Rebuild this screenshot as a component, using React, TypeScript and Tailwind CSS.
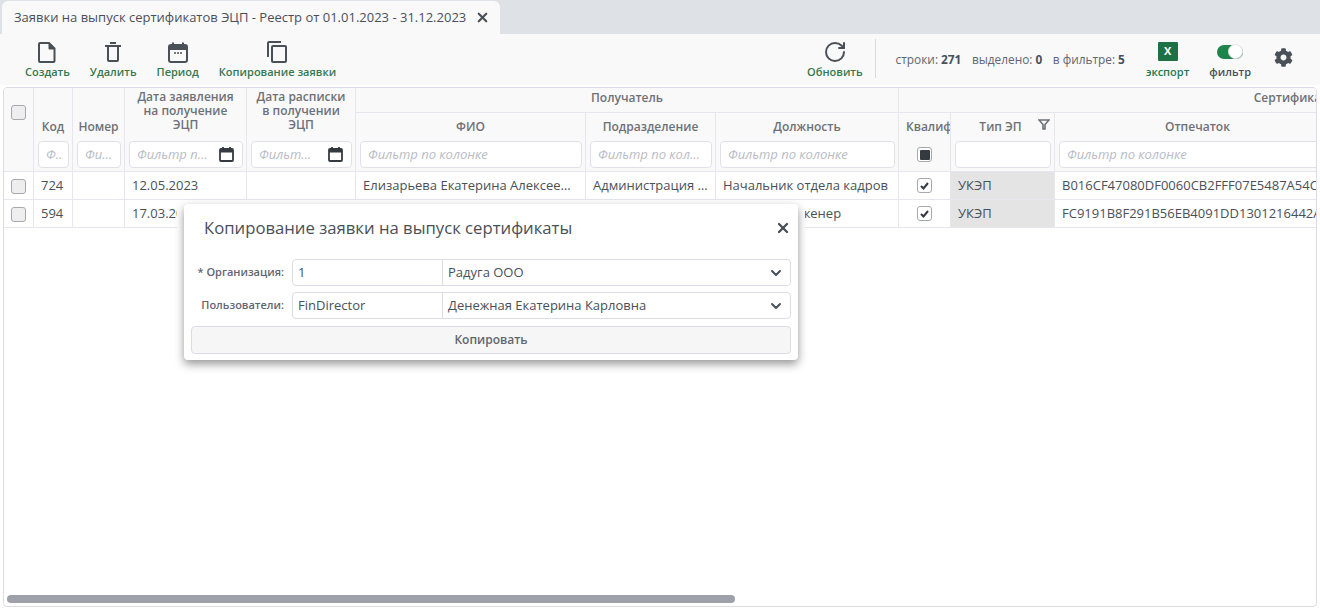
import { ChevronDown, RotateCw, X } from 'lucide-react';
import { FaCog } from 'react-icons/fa';

const FONT = "font-['Open_Sans',sans-serif]";

type Col = { key: string; title: string; width: number };

const RECIPIENT: Col[] = [
  { key: 'fio', title: 'ФИО', width: 230 },
  { key: 'dep', title: 'Подразделение', width: 130 },
  { key: 'pos', title: 'Должность', width: 183 },
];

const ROWS = [
  {
    id: '724',
    date: '12.05.2023',
    fio: 'Елизарьева Екатерина Алексеевна',
    dep: 'Администрация города',
    pos: 'Начальник отдела кадров',
    print: 'B016CF47080DF0060CB2FFF07E5487A54C0912AD',
  },
  {
    id: '594',
    date: '17.03.2023',
    fio: 'Денежная Екатерина Карловна',
    dep: 'Бухгалтерия',
    pos: 'Ведущий инженер',
    print: 'FC9191B8F291B56EB4091DD1301216442A77C1E0',
  },
];

function FileIcon() {
  return (
    <svg width="18" height="21" viewBox="0 0 18 21" fill="none" stroke="#495057" strokeWidth="2">
      <path d="M2 1h9l5.500 5.500V19a1 1 0 0 1-1 1H2a1 1 0 0 1-1-1V2a1 1 0 0 1 1-1z" />
      <path d="M11 1v6h6" fill="#495057" strokeWidth="1" />
    </svg>
  );
}

function TrashIcon() {
  return (
    <svg width="16" height="20" viewBox="0 0 16 20" fill="none" stroke="#495057" strokeWidth="2">
      <path d="M0 4h16M5 1h6" />
      <path d="M3 4v14a1 1 0 0 0 1 1h8a1 1 0 0 0 1-1V4" />
    </svg>
  );
}

function PeriodIcon() {
  return (
    <svg width="20" height="21" viewBox="0 0 20 21" fill="none">
      <rect x="1" y="3" width="18" height="17" rx="2" stroke="#495057" strokeWidth="2" />
      <path d="M1 3h18v5H1z" fill="#495057" />
      <path d="M5 0.500v3M15 0.500v3" stroke="#495057" strokeWidth="2" />
      <path d="M6 11h2M9 11h2M12 11h2" stroke="#495057" strokeWidth="1.500" />
    </svg>
  );
}

function CopyIcon() {
  return (
    <svg width="20" height="22" viewBox="0 0 20 22" fill="none" stroke="#495057" strokeWidth="2">
      <path d="M1 16V2a1 1 0 0 1 1-1h12" />
      <rect x="5" y="5" width="14" height="16" rx="1" />
    </svg>
  );
}

function SmallCalendar() {
  return (
    <svg width="15" height="15" viewBox="0 0 15 15" fill="none" className="shrink-0">
      <rect x="1" y="2" width="13" height="12" rx="1" stroke="#343a40" strokeWidth="1.800" />
      <path d="M1 2h13v3.500H1z" fill="#343a40" />
      <path d="M4 0v3M11 0v3" stroke="#343a40" strokeWidth="1.800" />
    </svg>
  );
}

function ToolButton({ icon, label }: { icon: React.ReactNode; label: string }) {
  return (
    <div className="flex flex-col items-center">
      <div className="flex h-[22px] items-center justify-center">{icon}</div>
      <span className="mt-[1px] text-[11px] leading-[16px] font-semibold text-[#35784f]">{label}</span>
    </div>
  );
}

function Check({ checked, dark, gray }: { checked?: boolean; dark?: boolean; gray?: boolean }) {
  return (
    <span
      className={`flex h-[15px] w-[15px] items-center justify-center rounded-[3px] border border-[#a6a8ae] ${gray ? 'bg-[#eeeeee]' : 'bg-white'}`}
    >
      {checked && (
        <svg width="9" height="8" viewBox="0 0 9 8" fill="none" stroke="#343a40" strokeWidth="2">
          <path d="M1 4l2.500 2.500L8 1" />
        </svg>
      )}
      {dark && <span className="h-[10px] w-[10px] rounded-[1px] bg-[#343a40]" />}
    </span>
  );
}

function FilterBox({ text, icon }: { text?: string; icon?: boolean }) {
  return (
    <div className={`flex h-[27px] items-center rounded-[4px] border border-[#e0e0ea] bg-white pl-[7px] ${icon ? 'gap-[10px] pr-[8px]' : 'pr-[5px]'}`}>
      <span className="min-w-0 flex-1 truncate text-left text-[13px] font-normal text-[#b9bcc6] italic">{text}</span>
      {icon && <SmallCalendar />}
    </div>
  );
}

function FilterCell({ text, icon }: { text?: string; icon?: boolean }) {
  return (
    <th className="border-r border-b border-[#e6e6ee] pt-[4px] pr-[3px] pb-[3px] pl-[4px] align-top font-normal">
      <FilterBox text={text} icon={icon} />
    </th>
  );
}

function DialogRow({ label, code, name }: { label: string; code: string; name: string }) {
  return (
    <div className="flex items-center">
      <label className="w-[101px] pr-[8px] text-right text-[11px] font-semibold text-[#5f6670]">{label}</label>
      <div className="flex h-[27px] flex-1 items-center rounded-[4px] border border-[#dcdce8] bg-white text-[13px] text-[#495057]">
        <span className="flex h-full w-[150px] items-center border-r border-[#dcdce8] pl-[5px]">{code}</span>
        <span className="flex-1 pl-[5px]">{name}</span>
        <ChevronDown size={16} strokeWidth={3} className="mr-[6px] text-[#495057]" />
      </div>
    </div>
  );
}

export default function App() {
  const th = 'border-r border-[#e6e6ee] text-[12px] leading-[14px] font-semibold text-[#6c7178]';
  const td = 'h-[28px] overflow-hidden border-r border-b border-[#e6e6ee] px-[7px] text-[13px] font-normal whitespace-nowrap text-[#495057]';

  return (
    <div className={`relative flex h-[611px] w-[1320px] flex-col overflow-hidden bg-white ${FONT}`}>
      {/* tabs */}
      <div className="flex h-[34px] shrink-0 items-end bg-[#dee1e6] pl-[2px]">
        <div className="flex h-[33px] w-[498px] items-center rounded-t-[6px] bg-[#f9f9f9] pl-[12px]">
          <span className="text-[13px] whitespace-nowrap text-[#4b4f5c]">
            Заявки на выпуск сертификатов ЭЦП - Реестр от 01.01.2023 - 31.12.2023
          </span>
          <X size={15} strokeWidth={3.500} className="ml-[9px] text-[#495057]" />
        </div>
      </div>

      {/* toolbar */}
      <div className="flex h-[51px] shrink-0 items-start bg-[#f9f9f9] pt-[7px] pl-[25px]">
        <div className="flex gap-[20px]">
          <ToolButton icon={<FileIcon />} label="Создать" />
          <ToolButton icon={<TrashIcon />} label="Удалить" />
          <ToolButton icon={<PeriodIcon />} label="Период" />
          <ToolButton icon={<CopyIcon />} label="Копирование заявки" />
        </div>
        <div className="ml-auto flex items-start pr-[27px]">
          <ToolButton icon={<RotateCw size={24} strokeWidth={2} className="text-[#495057]" />} label="Обновить" />
          <div className="mt-[-2px] ml-[12px] h-[39px] w-px bg-[#dcdcdc]" />
          <div className="mt-[10px] ml-[20px] flex gap-[10.500px] text-[11.850px] leading-[16px] text-[#5f6670]">
            <span>
              строки: <b className="font-bold text-[#495057]">271</b>
            </span>
            <span>
              выделено: <b className="font-bold text-[#495057]">0</b>
            </span>
            <span>
              в фильтре: <b className="font-bold text-[#495057]">5</b>
            </span>
          </div>
          <div className="ml-[21px] flex flex-col items-center">
            <div className="mt-[1px] flex h-[19px] w-[20px] items-center justify-center rounded-[1px] bg-[#1e7145] text-[11px] font-bold text-white">
              X
            </div>
            <span className="mt-[3px] text-[11px] leading-[16px] font-semibold text-[#217a50]">экспорт</span>
          </div>
          <div className="ml-[20px] flex flex-col items-center">
            <div className="mt-[1px] flex h-[19px] items-center">
              <div className="flex h-[14px] w-[26px] items-center justify-end rounded-full bg-[#1e8449]">
                <span className="h-[15px] w-[15px] rounded-full border border-[#e4e4e4] bg-white" />
              </div>
            </div>
            <span className="mt-[3px] text-[11px] leading-[16px] font-semibold text-[#495057]">фильтр</span>
          </div>
          <FaCog size={19} className="mt-[7px] ml-[23px] text-[#495057]" />
        </div>
      </div>

      {/* grid */}
      <div className="relative mx-[3px] mt-[2px] mb-[4px] min-h-0 flex-1 overflow-hidden rounded-[4px] border border-[#dcdce8] bg-white">
        <table className="w-[1679px] table-fixed border-separate border-spacing-0">
          <colgroup>
            <col className="w-[30px]" />
            <col className="w-[39px]" />
            <col className="w-[52px]" />
            <col className="w-[122px]" />
            <col className="w-[109px]" />
            {RECIPIENT.map((c) => (
              <col key={c.key} style={{ width: c.width }} />
            ))}
            <col className="w-[52px]" />
            <col className="w-[104px]" />
            <col className="w-[286px]" />
            <col className="w-[342px]" />
          </colgroup>
          <thead className="bg-[#f9f9fa]">
            <tr className="h-[25px]">
              <th rowSpan={3} className={`${th} border-b pt-[17px] align-top`}>
                <div className="flex justify-center">
                  <Check gray />
                </div>
              </th>
              <th rowSpan={2} className={`${th} pb-[3px] align-bottom`}>Код</th>
              <th rowSpan={2} className={`${th} pb-[3px] align-bottom`}>Номер</th>
              <th rowSpan={2} className={`${th} pb-[5px] align-bottom`}>
                Дата заявления<br />на получение<br />ЭЦП
              </th>
              <th rowSpan={2} className={`${th} pb-[5px] align-bottom`}>
                Дата расписки<br />в получении<br />ЭЦП
              </th>
              <th colSpan={3} className={`${th} border-b pb-[4px]`}>Получатель</th>
              <th colSpan={4} className={`${th} border-b pb-[4px]`}>Сертификат</th>
            </tr>
            <tr className="h-[24px]">
              {RECIPIENT.map((c) => (
                <th key={c.key} className={`${th} pt-[4px]`}>{c.title}</th>
              ))}
              <th className={`${th} overflow-hidden pt-[4px] pl-[7px] text-left whitespace-nowrap`}>Квалифицированная</th>
              <th className={`${th} relative pt-[4px]`}>
                <span className="relative left-[-2px]">Тип ЭП</span>
                <svg width="12" height="11" viewBox="0 0 12 11" fill="none" stroke="#6c7178" strokeWidth="1.600" className="absolute top-[6px] right-[4px]">
                  <path d="M1 1h10L7 5.500V10H5V5.500z" />
                </svg>
              </th>
              <th className={`${th} pt-[4px]`}>Отпечаток</th>
              <th className={th}></th>
            </tr>
            <tr className="h-[35px]">
              <FilterCell text="Фильтр по колонке" />
              <FilterCell text="Фильтр по колонке" />
              <FilterCell text="Фильтр по колонке" icon />
              <FilterCell text="Фильтр по колонке" icon />
              <FilterCell text="Фильтр по колонке" />
              <FilterCell text="Фильтр по колонке" />
              <FilterCell text="Фильтр по колонке" />
              <th className="border-r border-b border-[#e6e6ee] pt-[1px] font-normal">
                <div className="flex justify-center">
                  <Check dark />
                </div>
              </th>
              <FilterCell />
              <FilterCell text="Фильтр по колонке" />
              <FilterCell />
            </tr>
          </thead>
          <tbody>
            {ROWS.map((r) => (
              <tr key={r.id}>
                <td className="h-[28px] border-r border-b border-[#e6e6ee]">
                  <div className="flex justify-center pt-[1px]">
                    <Check gray />
                  </div>
                </td>
                <td className={td}>{r.id}</td>
                <td className={td}></td>
                <td className={td}>{r.date}</td>
                <td className={td}></td>
                <td className={`${td} truncate`}>{r.fio}</td>
                <td className={`${td} truncate`}>{r.dep}</td>
                <td className={td}>{r.pos}</td>
                <td className="border-r border-b border-[#e6e6ee]">
                  <div className="flex justify-center">
                    <Check checked />
                  </div>
                </td>
                <td className={`${td} bg-[#e4e4e4]`}>УКЭП</td>
                <td className={td}>{r.print}</td>
                <td className={td}></td>
              </tr>
            ))}
          </tbody>
        </table>
        <div className="absolute bottom-[3px] left-[3px] h-[8px] w-[728px] rounded-full bg-[#9ea1a9]" />
      </div>

      {/* dialog */}
      <div className="absolute top-[204px] left-[184px] flex h-[156px] w-[614px] flex-col rounded-[4px] bg-white px-[7px] shadow-[0_4px_10px_rgba(0,0,0,0.42),0_3px_0_7px_#fff]">
        <div className="flex h-[48px] shrink-0 items-center pl-[13px]">
          <span className="flex-1 text-[16.700px] font-medium text-[#495057]">Копирование заявки на выпуск сертификаты</span>
          <X size={16} strokeWidth={3.500} className="text-[#495057]" />
        </div>
        <div className="mt-[7px] flex flex-col gap-[6px]">
          <DialogRow label="* Организация:" code="1" name="Радуга ООО" />
          <DialogRow label="Пользователи:" code="FinDirector" name="Денежная Екатерина Карловна" />
        </div>
        <button className="mt-[7px] h-[28px] w-full rounded-[4px] border border-[#dcdce8] bg-[#f6f6f6] text-[12px] font-semibold text-[#5f6670]">
          Копировать
        </button>
      </div>
    </div>
  );
}
